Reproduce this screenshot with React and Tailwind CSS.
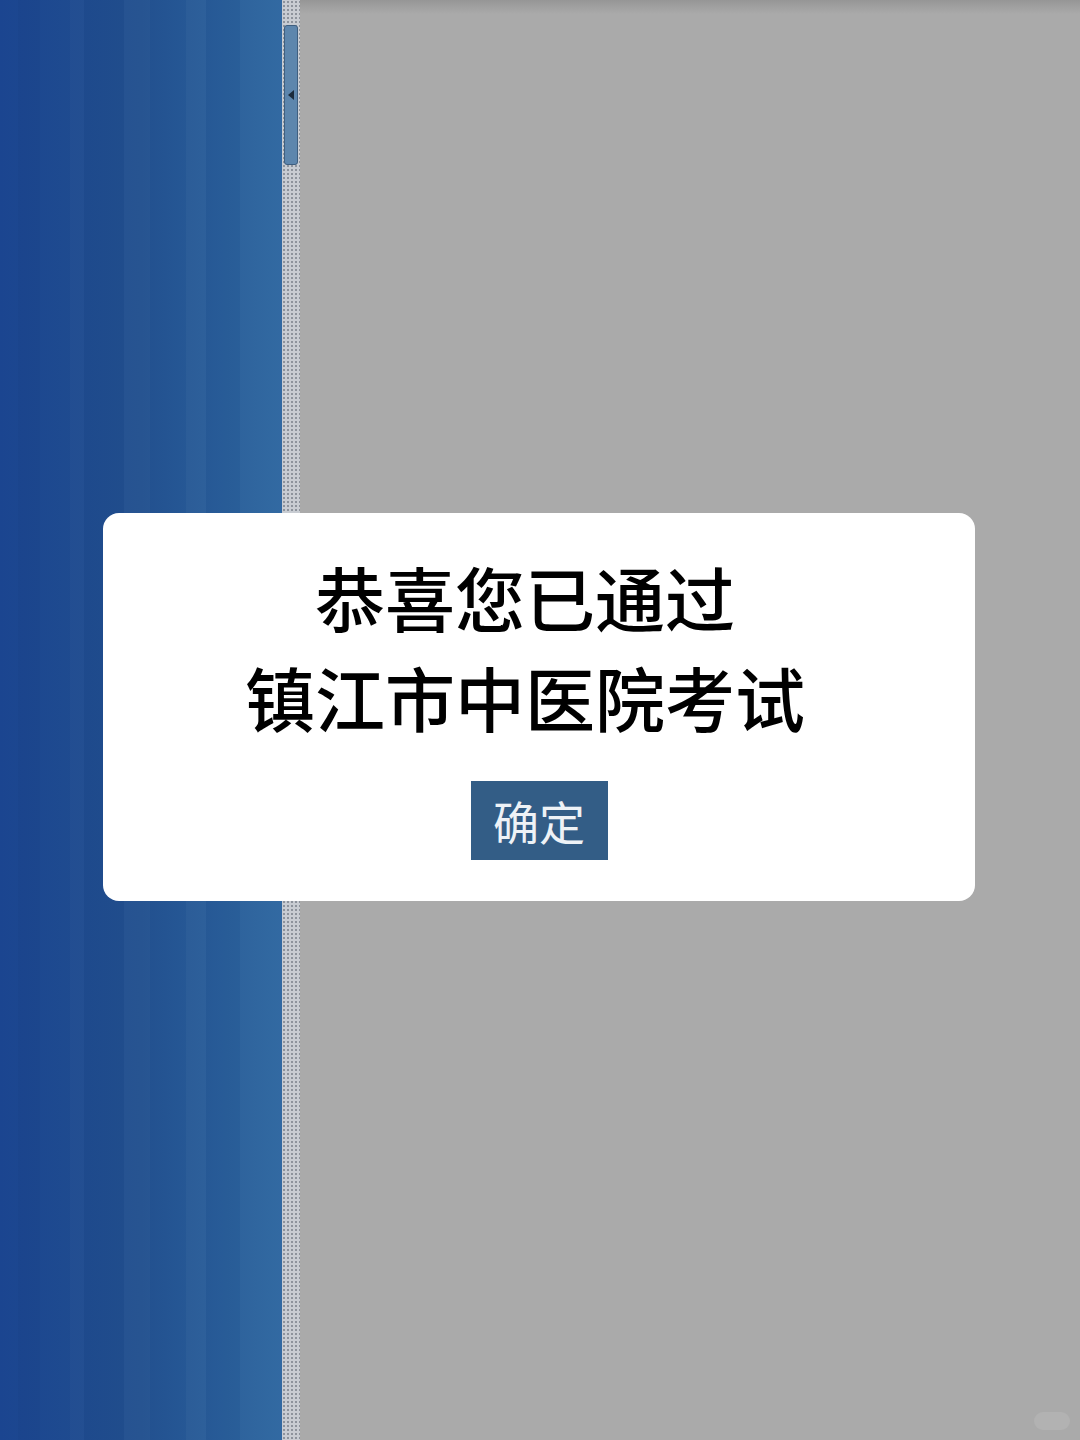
import React from "react";

// faint vertical streaks over the blue side panel
const streaks = [
  { w: "w-[18px]", c: "bg-[#ffffff]/0" },
  { w: "w-[22px]", c: "bg-[#0d2f6b]/[0.06]" },
  { w: "w-[30px]", c: "bg-[#ffffff]/0" },
  { w: "w-[14px]", c: "bg-[#ffffff]/[0.02]" },
  { w: "w-[40px]", c: "bg-[#0d2f6b]/[0.06]" },
  { w: "w-[26px]", c: "bg-[#ffffff]/[0.025]" },
  { w: "w-[36px]", c: "bg-[#ffffff]/0" },
  { w: "w-[20px]", c: "bg-[#ffffff]/[0.03]" },
  { w: "w-[34px]", c: "bg-[#0d2f6b]/[0.04]" },
  { w: "w-[42px]", c: "bg-[#ffffff]/[0.02]" },
];

const SidePanel = () => (
  <div className="flex h-full w-[282px] shrink-0 bg-gradient-to-r from-[#1b4590] via-[#22508f] to-[#2e67a1]">
    {streaks.map((s, i) => (
      <div key={i} className={`${s.w} ${s.c} h-full`} />
    ))}
  </div>
);

const Divider = () => (
  <div className="relative h-full w-[18px] shrink-0 bg-[#c8ccd2] bg-[radial-gradient(circle,#8d939c_0.8px,transparent_1.2px)] bg-[length:4px_4px]">
    <div className="absolute left-[2px] top-[25px] flex h-[140px] w-[14px] items-center justify-center rounded-[3px] border border-[#3f5f80] bg-[#5d86ad]">
      <div className="h-0 w-0 border-y-[5px] border-r-[6px] border-y-transparent border-r-[#1b2b3c]" />
    </div>
  </div>
);

const App = () => {
  return (
    <div
      className="relative flex h-[1440px] w-[1080px] overflow-hidden"
      style={{ fontFamily: '"Noto Sans CJK SC", "Noto Sans", sans-serif' }}
    >
      <SidePanel />
      <Divider />
      <div className="flex h-full flex-1 flex-col bg-[#aaaaaa]">
        <div className="h-[14px] bg-gradient-to-b from-[#969696] to-[#aaaaaa]" />
        <div className="flex-1" />
        <div className="flex justify-end px-[10px] pb-[10px]">
          <div className="h-[18px] w-[36px] rounded-full bg-[#b2b2b2]" />
        </div>
      </div>

      <div className="absolute inset-0 pl-[103px] pt-[513px]">
        <div className="flex h-[388px] w-[872px] flex-col items-center rounded-[16px] bg-white pt-[34px]">
          <div className="pr-[28px] text-center font-medium text-black">
            <div className="text-[70px] leading-[100px]">恭喜您已通过</div>
            <div className="text-[70px] leading-[100px]">镇江市中医院考试</div>
          </div>
          <button className="mt-[34px] flex h-[79px] w-[137px] items-center justify-center bg-[#335d86] text-[46px] text-[#eef2f6]">
            确定
          </button>
        </div>
      </div>
    </div>
  );
};

export default App;
